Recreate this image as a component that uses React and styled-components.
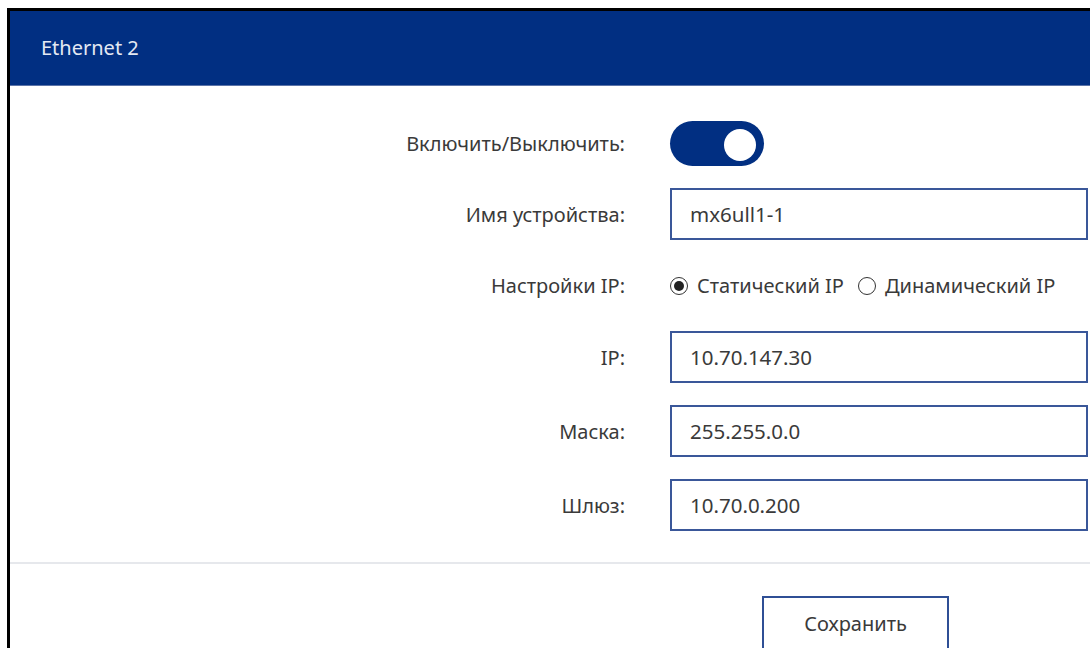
import React, { useState } from 'react'
import styled, { createGlobalStyle } from 'styled-components'

const GlobalStyle = createGlobalStyle`
  html, body {
    margin: 0;
    height: 100%;
    background: #ffffff;
    overflow: hidden;
  }
  body {
    box-sizing: border-box;
    padding: 8px 0 0 7px;
    font-family: "Noto Sans", "Open Sans", sans-serif;
    color: #333;
  }
`

const Panel = styled.div`
  width: 1100px;
  height: calc(100vh - 8px);
  box-sizing: border-box;
  overflow: hidden;
  border-top: 3px solid #000;
  border-left: 3px solid #000;
  background: #fff;
`

const Header = styled.div`
  height: 75px;
  background: #012f82;
  border-bottom: 1px solid #5b73a8;
  box-sizing: border-box;
  display: flex;
  align-items: center;
  padding: 0 0 2px 31px;
  color: #e4e9f3;
  font-size: 20px;
`

const Form = styled.div`
  display: grid;
  grid-template-columns: 615px 418px;
  column-gap: 45px;
  row-gap: 22px;
  padding: 35px 0 31px;
  border-bottom: 2px solid #e6e8ec;
`

const Label = styled.div`
  display: flex;
  align-items: center;
  justify-content: flex-end;
  height: ${p => p.$h || 52}px;
  font-size: 20px;
  color: #3a3a3a;
`

const Field = styled.div`
  display: flex;
  align-items: center;
  height: ${p => p.$h || 52}px;
`

const Input = styled.input`
  width: 100%;
  height: 100%;
  box-sizing: border-box;
  border: 2px solid #3a5799;
  padding: 0 18px;
  font-family: inherit;
  font-size: 20.5px;
  color: #3a3a3a;
  outline: none;
`

const Toggle = styled.button`
  width: 94px;
  height: 45px;
  border: none;
  padding: 2px 8px 0 0;
  border-radius: 23px;
  background: #012f82;
  display: flex;
  align-items: center;
  justify-content: ${p => (p.$on ? 'flex-end' : 'flex-start')};
  cursor: pointer;

  &::after {
    content: '';
    width: 32px;
    height: 32px;
    border-radius: 50%;
    background: #fff;
  }
`

const RadioGroup = styled.div`
  display: flex;
  align-items: center;
  gap: 14px;
  white-space: nowrap;
`

const RadioOption = styled.label`
  display: flex;
  align-items: center;
  gap: 9px;
  font-size: 20px;
  color: #3a3a3a;
  cursor: pointer;
`

const RadioDot = styled.span`
  width: 18px;
  height: 18px;
  box-sizing: border-box;
  border-radius: 50%;
  border: 1.5px solid #333;
  display: flex;
  align-items: center;
  justify-content: center;

  &::after {
    content: '';
    width: 10px;
    height: 10px;
    border-radius: 50%;
    background: ${p => (p.$checked ? '#222' : 'transparent')};
  }
`

const Footer = styled.div`
  display: flex;
  padding: 32px 0 0 752px;
`

const SaveButton = styled.button`
  width: 187px;
  height: 56px;
  background: #fff;
  border: 2px solid #2f4f95;
  font-family: inherit;
  font-size: 20px;
  color: #3a3a3a;
  padding-bottom: 2px;
  cursor: pointer;
`

export default function App() {
  const [enabled, setEnabled] = useState(true)
  const [mode, setMode] = useState('static')

  return (
    <>
      <GlobalStyle />
      <Panel>
        <Header>Ethernet 2</Header>
        <Form>
          <Label $h={45}>Включить/Выключить:</Label>
          <Field $h={45}>
            <Toggle $on={enabled} onClick={() => setEnabled(!enabled)} />
          </Field>

          <Label>Имя устройства:</Label>
          <Field>
            <Input defaultValue="mx6ull1-1" />
          </Field>

          <Label $h={47}>Настройки IP:</Label>
          <Field $h={47}>
            <RadioGroup>
              <RadioOption onClick={() => setMode('static')}>
                <RadioDot $checked={mode === 'static'} />
                Статический IP
              </RadioOption>
              <RadioOption onClick={() => setMode('dhcp')}>
                <RadioDot $checked={mode === 'dhcp'} />
                Динамический IP
              </RadioOption>
            </RadioGroup>
          </Field>

          <Label>IP:</Label>
          <Field>
            <Input defaultValue="10.70.147.30" />
          </Field>

          <Label>Маска:</Label>
          <Field>
            <Input defaultValue="255.255.0.0" />
          </Field>

          <Label>Шлюз:</Label>
          <Field>
            <Input defaultValue="10.70.0.200" />
          </Field>
        </Form>
        <Footer>
          <SaveButton>Сохранить</SaveButton>
        </Footer>
      </Panel>
    </>
  )
}
